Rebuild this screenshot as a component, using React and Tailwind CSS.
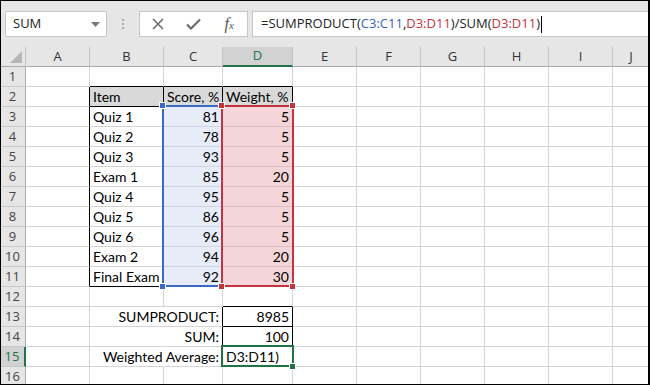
import React from 'react';

const cols = ['A', 'B', 'C', 'D', 'E', 'F', 'G', 'H', 'I', 'J'];
const widths = ['w-[64px]', 'w-[74px]', 'w-[59px]', 'w-[70px]', 'w-[64px]', 'w-[64px]', 'w-[64px]', 'w-[64px]', 'w-[64px]', 'flex-1'];

const data = [
    ['Quiz 1', 81, 5],
    ['Quiz 2', 78, 5],
    ['Quiz 3', 93, 5],
    ['Exam 1', 85, 20],
    ['Quiz 4', 95, 5],
    ['Quiz 5', 86, 5],
    ['Quiz 6', 96, 5],
    ['Exam 2', 94, 20],
    ['Final Exam', 92, 30],
];

const totals = { 13: ['SUMPRODUCT:', '8985'], 14: ['SUM:', '100'], 15: ['Weighted Average:', 'D3:D11)'] };

// figures out the content and borders of one cell
const cellInfo = (r, c) => {
    let right = 'border-r-[#d4d4d4]';
    let bottom = 'border-b-[#d4d4d4]';
    let bg = 'bg-white';
    let text = null;
    let align = 'justify-start';

    if (r === 1 && c >= 1 && c <= 3) bottom = 'border-b-black';
    if (r >= 2 && r <= 11 && c === 0) right = 'border-r-black';
    if (r === 2 && c >= 1 && c <= 3) {
        right = 'border-r-black';
        bottom = 'border-b-black';
        bg = 'bg-[#d9d9d9]';
        text = ['Item', 'Score, %', 'Weight, %'][c - 1];
    }
    if (r >= 3 && r <= 11) {
        const row = data[r - 3];
        if (c === 1) {
            right = 'border-r-black';
            text = row[0];
            if (r === 11) bottom = 'border-b-black';
        }
        if (c === 2) {
            bg = 'bg-[#e7edf8]';
            bottom = 'border-b-[#cfd6e2]';
            text = row[1];
            align = 'justify-end';
        }
        if (c === 3) {
            bg = 'bg-[#f5d6d8]';
            bottom = 'border-b-[#dcc0c2]';
            text = row[2];
            align = 'justify-end';
        }
    }
    if (r === 12 && c === 3) bottom = 'border-b-black';
    if (r >= 13 && r <= 15) {
        if (c === 1) right = 'border-r-white';
        if (c === 2) {
            right = 'border-r-black';
            text = totals[r][0];
            align = 'justify-end';
        }
        if (c === 3) {
            text = totals[r][1];
            if (r < 15) {
                right = 'border-r-black';
                bottom = 'border-b-black';
                align = 'justify-end';
            }
        }
    }
    return { right, bottom, bg, text, align };
};

const Handle = ({ className }) => (
    <div className={`absolute w-[7px] h-[7px] border border-white ${className}`} />
);

const App = () => {
    const rows = Array.from({ length: 16 }, (_, i) => i + 1);

    return (
        <div className="relative w-[650px] h-[385px] overflow-hidden bg-white select-none" style={{ fontFamily: 'Lato, "Liberation Sans", sans-serif' }}>
            {/* Formula bar */}
            <div className="h-[47px] bg-[#e6e6e6] flex items-start pt-[11px] pl-[5px]" style={{ fontFamily: '"Open Sans", "Liberation Sans", sans-serif' }}>
                <div className="w-[102px] h-[26px] bg-white border border-[#c6c6c6] flex items-center justify-between pl-[7px] pr-[6px] text-[13px] text-[#222]">
                    <span>SUM</span>
                    <svg width="9" height="5" viewBox="0 0 9 5"><path d="M0 0h9L4.5 5z" fill="#7a7a7a" /></svg>
                </div>
                <div className="w-[32px] h-[26px] flex flex-col items-center justify-center gap-[2px]">
                    <span className="w-[2px] h-[2px] bg-[#a8a8a8]" />
                    <span className="w-[2px] h-[2px] bg-[#a8a8a8]" />
                    <span className="w-[2px] h-[2px] bg-[#a8a8a8]" />
                </div>
                <div className="w-[109px] h-[26px] bg-white border border-[#c6c6c6] flex items-center">
                    <div className="w-[36px] flex justify-center">
                        <svg width="12" height="12" viewBox="0 0 12 12"><path d="M1 1l10 10M11 1L1 11" stroke="#6b6b6b" strokeWidth="1.6" /></svg>
                    </div>
                    <div className="w-[36px] flex justify-center">
                        <svg width="15" height="12" viewBox="0 0 15 12"><path d="M1 6.5l4 4L14 1.5" stroke="#6b6b6b" strokeWidth="2.2" fill="none" /></svg>
                    </div>
                    <div className="w-[36px] flex justify-center items-baseline text-[#555] italic leading-none" style={{ fontFamily: '"Liberation Serif", serif' }}>
                        <span className="text-[16px]">f</span>
                        <span className="text-[11px]">x</span>
                    </div>
                </div>
                <div className="ml-[4px] flex-1 h-[26px] bg-white border border-[#c6c6c6] border-r-0 flex items-center pl-[8px] text-[13px] text-[#222] whitespace-nowrap">
                    <span>=SUMPRODUCT(</span>
                    <span className="text-[#3564c1]">C3:C11</span>
                    <span>,</span>
                    <span className="text-[#c4343f]">D3:D11</span>
                    <span>)/SUM(</span>
                    <span className="text-[#c4343f]">D3:D11</span>
                    <span>)</span>
                    <span className="w-px h-[17px] bg-black ml-[1px]" />
                </div>
            </div>

            {/* Column headers */}
            <div className="flex h-[20px] bg-[#e6e6e6] text-[13px] text-[#333]" style={{ fontFamily: '"Open Sans", "Liberation Sans", sans-serif' }}>
                <div className="w-[26px] border-r border-b border-r-[#c4c4c4] border-b-[#ababab] relative">
                    <svg className="absolute right-[3px] bottom-[3px]" width="12" height="12" viewBox="0 0 12 12"><path d="M12 0v12H0z" fill="#b5b5b5" /></svg>
                </div>
                {cols.map((c, i) => (
                    <div
                        key={c}
                        className={`${widths[i]} flex items-center justify-center border-r border-r-[#c4c4c4] ${c === 'D' ? 'bg-[#d2d2d2] text-[#217346] border-b-2 border-b-[#217346]' : 'border-b border-b-[#ababab]'}`}
                    >
                        {c}
                    </div>
                ))}
            </div>

            {/* Rows */}
            {rows.map(r => (
                <div key={r} className="flex h-[20px] text-[14px] text-black">
                    <div
                        className={`w-[26px] flex items-center justify-center text-[13px] border-b border-b-[#c8c8c8] ${r === 15 ? 'bg-[#d2d2d2] text-[#217346] border-r-2 border-r-[#217346]' : 'bg-[#e6e6e6] text-[#444] border-r border-r-[#ababab]'}`}
                        style={{ fontFamily: '"Open Sans", "Liberation Sans", sans-serif' }}
                    >
                        {r}
                    </div>
                    {cols.map((c, i) => {
                        const info = cellInfo(r, i);
                        return (
                            <div
                                key={c}
                                className={`${widths[i]} ${info.bg} ${info.right} ${info.bottom} ${info.align} border-r border-b flex items-end px-[3px] whitespace-nowrap leading-[19px]`}
                            >
                                {info.text !== null && <span>{info.text}</span>}
                            </div>
                        );
                    })}
                </div>
            ))}

            {/* Range highlights from the formula */}
            <div className="absolute left-[162px] top-[105px] w-[61px] h-[182px] border-2 border-[#3a6bc4]" />
            <div className="absolute left-[221px] top-[105px] w-[73px] h-[182px] border-2 border-[#c4343f]" />
            <Handle className="left-[159px] top-[102px] bg-[#3a6bc4]" />
            <Handle className="left-[159px] top-[283px] bg-[#3a6bc4]" />
            <Handle className="left-[218px] top-[102px] bg-[#c4343f]" />
            <Handle className="left-[289px] top-[102px] bg-[#c4343f]" />
            <Handle className="left-[218px] top-[283px] bg-[#c4343f]" />
            <Handle className="left-[289px] top-[283px] bg-[#c4343f]" />

            {/* Active cell D15 */}
            <div className="absolute left-[221px] top-[345px] w-[73px] h-[22px] border-2 border-[#217346]" />
            <Handle className="left-[289px] top-[363px] bg-[#217346]" />

            {/* Window frame */}
            <div className="absolute inset-0 border border-black border-r-2 pointer-events-none" />
        </div>
    );
};

export default App;
